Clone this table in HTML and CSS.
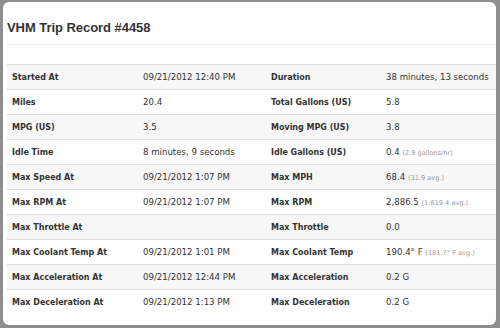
FILE: index.html
```html
<!DOCTYPE html>
<html>
<head>
<meta charset="utf-8">
<link rel="stylesheet" href="styles.css">
</head>
<body>
<div class="card">
  <div class="header"><h3 class="title">VHM Trip Record #4458</h3></div>
  <table class="record">
    <colgroup><col class="c1"><col class="c2"><col class="c3"><col class="c4"></colgroup>
    <tbody>
      <tr><th>Started At</th><td>09/21/2012 12:40 PM</td><th>Duration</th><td>38 minutes, 13 seconds</td></tr>
      <tr><th>Miles</th><td>20.4</td><th>Total Gallons (US)</th><td>5.8</td></tr>
      <tr><th>MPG (US)</th><td>3.5</td><th>Moving MPG (US)</th><td>3.8</td></tr>
      <tr><th>Idle Time</th><td>8 minutes, 9 seconds</td><th>Idle Gallons (US)</th><td>0.4 <span class="sub">(2.9 gallons/hr)</span></td></tr>
      <tr><th>Max Speed At</th><td>09/21/2012 1:07 PM</td><th>Max MPH</th><td>68.4 <span class="sub">(31.9 avg.)</span></td></tr>
      <tr><th>Max RPM At</th><td>09/21/2012 1:07 PM</td><th>Max RPM</th><td>2,886.5 <span class="sub">(1,619.4 avg.)</span></td></tr>
      <tr><th>Max Throttle At</th><td></td><th>Max Throttle</th><td>0.0</td></tr>
      <tr><th>Max Coolant Temp At</th><td>09/21/2012 1:01 PM</td><th>Max Coolant Temp</th><td>190.4° F <span class="sub">(181.7° F avg.)</span></td></tr>
      <tr><th>Max Acceleration At</th><td>09/21/2012 12:44 PM</td><th>Max Acceleration</th><td>0.2 G</td></tr>
      <tr><th>Max Deceleration At</th><td>09/21/2012 1:13 PM</td><th>Max Deceleration</th><td>0.2 G</td></tr>
    </tbody>
  </table>
</div>
</body>
</html>
```
FILE: styles.css
```css
html, body {
  margin: 0;
  padding: 0;
}
body {
  background: #8e8e8e;
  width: 500px;
  height: 328px;
  overflow: hidden;
  padding: 2px 4px 3px 3px;
  box-sizing: border-box;
  font-family: "DejaVu Sans", Verdana, sans-serif;
  color: #333;
}
.card {
  background: #fff;
  border-radius: 6px;
  height: 323px;
  overflow: hidden;
  padding-left: 4px;
  box-sizing: border-box;
}
.header {
  padding-top: 18px;
  padding-bottom: 8px;
  border-bottom: 1px solid #eee;
}
.title {
  margin: 0;
  font-family: "Liberation Sans", Arial, sans-serif;
  font-weight: bold;
  font-size: 13px;
  line-height: 16px;
  color: #333;
  letter-spacing: -0.05px;
}
.record {
  margin-top: 19px;
  width: 100%;
  border-collapse: collapse;
  table-layout: fixed;
}
.c1 { width: 131px; }
.c2 { width: 128px; }
.c3 { width: 115px; }
.record th, .record td {
  border-top: 1px solid #ddd;
  height: 24px;
  padding: 0 0 0 5px;
  text-align: left;
  vertical-align: middle;
  font-size: 8.6px;
  white-space: nowrap;
}
.record th {
  font-weight: bold;
  font-stretch: condensed;
  font-size: 8.9px;
  color: #333;
}
.record td {
  color: #333;
}
.record tr:nth-child(odd) {
  background: #f7f7f7;
}
.sub {
  font-size: 6.6px;
  color: #999;
}
```
